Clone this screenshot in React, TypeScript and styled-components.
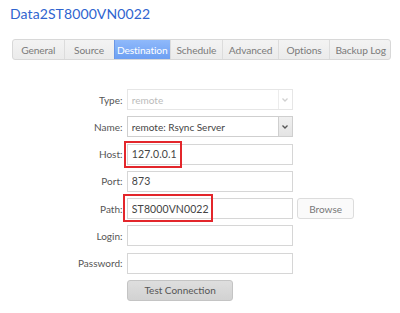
import React from 'react'
import styled, { createGlobalStyle } from 'styled-components'

const GlobalStyle = createGlobalStyle`
  html, body {
    margin: 0;
    padding: 0;
    background: #fff;
  }
  body {
    font-family: Lato, 'Open Sans', sans-serif;
    color: #555;
  }
`

const tabs = [
  { label: 'General', width: 50.5 },
  { label: 'Source', width: 50 },
  { label: 'Destination', width: 56.5 },
  { label: 'Schedule', width: 51.7 },
  { label: 'Advanced', width: 56.8 },
  { label: 'Options', width: 50.2 },
  { label: 'Backup Log', width: 63 },
]

const Chevron = ({ color }: { color: string }) => (
  <svg width="8" height="6" viewBox="0 0 8 6">
    <polyline points="1.5,1.5 4,4 6.5,1.5" fill="none" stroke={color} strokeWidth="1.3" />
  </svg>
)

const App = () => {
  return (
    <Page>
      <GlobalStyle />
      <Title>Data2ST8000VN0022</Title>
      <TabBar>
        {tabs.map((t) => (
          <Tab key={t.label} $active={t.label === 'Destination'} $width={t.width}>
            {t.label}
          </Tab>
        ))}
      </TabBar>
      <Form>
        <Label>Type:</Label>
        <Select $disabled>
          <SelectValue $disabled>remote</SelectValue>
          <ArrowBox $disabled>
            <Chevron color="#d0d0d0" />
          </ArrowBox>
        </Select>
        <span />

        <Label>Name:</Label>
        <Select>
          <SelectValue>remote: Rsync Server</SelectValue>
          <ArrowBox>
            <Chevron color="#555" />
          </ArrowBox>
        </Select>
        <span />

        <Label>Host:</Label>
        <Field>
          <Input defaultValue="127.0.0.1" />
          <Highlight $left={-2.7} $top={-2.6} $width={57.7} $height={26.6} />
        </Field>
        <span />

        <Label>Port:</Label>
        <Input defaultValue="873" />
        <span />

        <Label>Path:</Label>
        <Field>
          <Input defaultValue="ST8000VN0022" />
          <Highlight $left={-3.7} $top={-4.3} $width={90.3} $height={28.3} />
        </Field>
        <BrowseButton>Browse</BrowseButton>

        <Label>Login:</Label>
        <Input />
        <span />

        <Label>Password:</Label>
        <Input type="password" />
        <span />

        <span />
        <TestButton>Test Connection</TestButton>
        <span />
      </Form>
    </Page>
  )
}

export default App

const Page = styled.div`
  width: 400px;
  height: 313px;
  overflow: hidden;
  padding: 5px 0 0 0;
  box-sizing: border-box;
`

const Title = styled.div`
  margin-left: 10px;
  font-size: 14px;
  line-height: 18px;
  letter-spacing: 0.1px;
  color: #2f64cf;
`

const TabBar = styled.div`
  display: flex;
  margin: 16px 0 0 12px;
  width: 379px;
  height: 21px;
  box-sizing: border-box;
  border: 1px solid #d8d8d8;
  border-radius: 3px;
  background: linear-gradient(#f3f3f3, #ebebeb);
  overflow: hidden;
`

const Tab = styled.div<{ $active?: boolean; $width: number }>`
  flex: 0 0 ${({ $width }) => $width}px;
  display: flex;
  align-items: center;
  justify-content: center;
  font-size: 10.2px;
  letter-spacing: -0.1px;
  color: ${({ $active }) => ($active ? '#fff' : '#7a7a7a')};
  background: ${({ $active }) =>
    $active ? 'linear-gradient(#8fb9fb, #6d9ff2)' : 'transparent'};
  border-left: 1px solid ${({ $active }) => ($active ? '#6b98e6' : '#dcdcdc')};
  box-sizing: border-box;
  white-space: nowrap;
  &:first-child {
    border-left: none;
  }
`

const Form = styled.div`
  display: grid;
  grid-template-columns: 114px 166px 57px;
  grid-auto-rows: 21px;
  column-gap: 4.3px;
  row-gap: 6.25px;
  margin: 29px 0 0 8.5px;
  align-items: stretch;
`

const Label = styled.div`
  display: flex;
  align-items: center;
  justify-content: flex-end;
  font-size: 10px;
  color: #555;
`

const Field = styled.div`
  position: relative;
  display: flex;
`

const Input = styled.input`
  width: 100%;
  height: 21px;
  box-sizing: border-box;
  border: 1px solid #d6d6d6;
  background: #fff;
  padding: 0 4px;
  font-family: Lato, 'Open Sans', sans-serif;
  font-size: 10.5px;
  color: #444;
  letter-spacing: 0.1px;
  outline: none;
`

const Select = styled.div<{ $disabled?: boolean }>`
  display: flex;
  box-sizing: border-box;
  border: 1px solid ${({ $disabled }) => ($disabled ? '#e6e6e6' : '#cfcfcf')};
  background: #fff;
`

const SelectValue = styled.div<{ $disabled?: boolean }>`
  flex: 1;
  display: flex;
  align-items: center;
  padding: 0 4px;
  font-size: 10px;
  color: ${({ $disabled }) => ($disabled ? '#bbb' : '#444')};
`

const ArrowBox = styled.div<{ $disabled?: boolean }>`
  width: 13px;
  display: flex;
  align-items: center;
  justify-content: center;
  border-left: 1px solid ${({ $disabled }) => ($disabled ? '#ececec' : '#cfcfcf')};
  background: ${({ $disabled }) => ($disabled ? '#fff' : 'linear-gradient(#f0f0f0, #e4e4e4)')};
`

const Highlight = styled.span<{ $left: number; $top: number; $width: number; $height: number }>`
  position: absolute;
  left: ${({ $left }) => $left}px;
  top: ${({ $top }) => $top}px;
  width: ${({ $width }) => $width}px;
  height: ${({ $height }) => $height}px;
  box-sizing: border-box;
  border: 2px solid #e3262b;
  pointer-events: none;
`

const BrowseButton = styled.button`
  height: 21px;
  box-sizing: border-box;
  border: 1px solid #dcdcdc;
  border-radius: 3px;
  background: #fafafa;
  font-family: Lato, 'Open Sans', sans-serif;
  font-size: 10px;
  color: #777;
  padding: 0;
`

const TestButton = styled.button`
  width: 106.6px;
  height: 21px;
  box-sizing: border-box;
  border: 1px solid #c4c4c4;
  border-radius: 3px;
  background: linear-gradient(#dedede, #d2d2d2);
  font-family: Lato, 'Open Sans', sans-serif;
  font-size: 10px;
  color: #555;
  padding: 0;
`
